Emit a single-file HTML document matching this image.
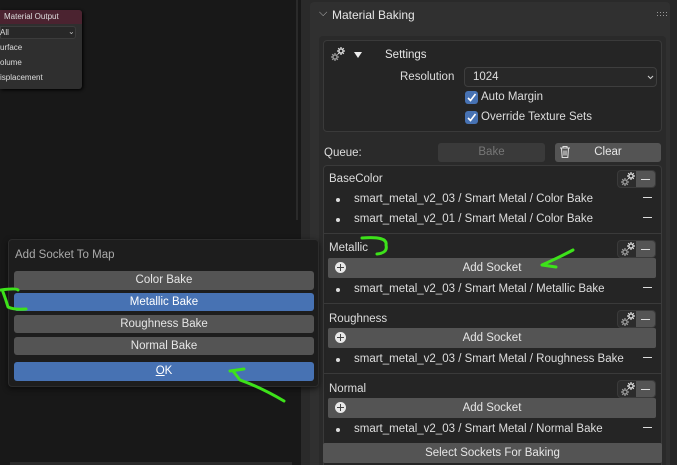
<!DOCTYPE html>
<html style="width:677px;height:465px;overflow:hidden"><head><meta charset="utf-8"><style>
*{margin:0;padding:0;box-sizing:border-box}
body{width:677px;height:465px;overflow:hidden;background:#181818;font-family:"Liberation Sans","DejaVu Sans",sans-serif;font-size:11.5px;color:#ddd;position:relative}
.a{position:absolute}
.t{position:absolute;white-space:nowrap}
.btn{position:absolute;background:#545454;border-radius:3px;color:#e6e6e6;text-align:center;font-size:11.5px}
.blue{background:#4772b3;color:#fff}
.gb{position:absolute;width:39px;height:18px;border-radius:4px;border:1px solid #3a3a3a;background:#2c2c2c}
.gb .m{position:absolute;right:0;top:0;width:19px;height:16px;background:#545454;border-radius:0 3px 3px 0}
.gb .m:after,.minus:after{content:"";position:absolute;left:5px;top:8px;width:9px;height:1px;background:#ddd}
.minus{position:absolute;width:19px;height:16px}
.dot{position:absolute;width:4px;height:4px;border-radius:2px;background:#ddd}
.plus{position:absolute;width:11px;height:11px;border-radius:6px;background:#e8e8e8}
.plus:before{content:"";position:absolute;left:2px;top:5px;width:7px;height:1px;background:#444}
.plus:after{content:"";position:absolute;left:5px;top:2px;width:1px;height:7px;background:#444}
</style></head><body>

<!-- node -->
<div class="a" style="left:0;top:10px;width:82px;height:79px;background:#2f2f2f;border-radius:0 3px 3px 0;box-shadow:1px 1px 3px #000"></div>
<div class="a" style="left:0;top:10px;width:82px;height:14px;background:#4b2330;border-radius:0 3px 0 0"></div>
<div class="t" style="left:4px;top:12px;font-size:8px;color:#ddd">Material Output</div>
<div class="a" style="left:0;top:26px;width:76px;height:13px;background:#282828;border:1px solid #3c3c3c;border-radius:0 3px 3px 0"></div>
<div class="t" style="left:0;top:28px;font-size:8px">All</div>
<div class="t" style="left:68px;top:27px;font-size:8px;color:#bbb">⌄</div>
<div class="t" style="left:0;top:43px;font-size:8px">urface</div>
<div class="t" style="left:0;top:58px;font-size:8px">olume</div>
<div class="t" style="left:0;top:73px;font-size:8px">isplacement</div>

<!-- separators -->
<div class="a" style="left:296px;top:0;width:2px;height:220px;background:#2a2a2a"></div>
<div class="a" style="left:10px;top:462px;width:282px;height:3px;background:#2a2a2a"></div>

<!-- right column -->
<div class="a" style="left:301px;top:0;width:376px;height:465px;background:#2a2a2a"></div>
<div class="a" style="left:310px;top:2px;width:360px;height:463px;background:#303030;border-radius:4px 4px 0 0"></div>
<div class="a" style="left:670px;top:0;width:7px;height:465px;background:#262626"></div>
<div class="t" style="left:319px;top:7px;font-size:11px;color:#bbb">⌵</div>
<div class="t" style="left:332px;top:8px;font-size:12px;color:#e6e6e6">Material Baking</div>
<svg class="a" style="left:657px;top:12px" width="12" height="6"><g fill="#999"><rect x="0" y="0" width="1" height="1"/><rect x="3" y="0" width="1" height="1"/><rect x="6" y="0" width="1" height="1"/><rect x="9" y="0" width="1" height="1"/><rect x="0" y="3" width="1" height="1"/><rect x="3" y="3" width="1" height="1"/><rect x="6" y="3" width="1" height="1"/><rect x="9" y="3" width="1" height="1"/></g></svg>
<div class="a" style="left:319px;top:36px;width:347px;height:429px;background:#2a2a2a;border-radius:4px 4px 0 0"></div>

<!-- settings box -->
<div class="a" style="left:323px;top:40px;width:339px;height:92px;background:#252525;border:1px solid #3a3a3a;border-radius:4px"></div>
<svg class="a" style="left:330px;top:46px" width="16" height="16" viewBox="0 0 16 16"><g stroke="#ddd" stroke-width="1.3"><circle cx="11" cy="5" r="2" fill="none"/><path d="M11 1v2M11 7v2M7 5h2M13 5h2M8.2 2.2l1.3 1.3M12.5 6.5l1.3 1.3M8.2 7.8l1.3-1.3M12.5 3.5l1.3-1.3"/></g><g stroke="#999" stroke-width="1.3"><circle cx="5" cy="11" r="2" fill="none"/><path d="M5 7v2M5 13v2M1 11h2M7 11h2M2.2 8.2l1.3 1.3M6.5 12.5l1.3 1.3M2.2 13.8l1.3-1.3M6.5 9.5l1.3-1.3"/></g></svg>
<div class="a" style="left:354px;top:52px;width:0;height:0;border-left:4px solid transparent;border-right:4px solid transparent;border-top:6px solid #eee"></div>
<div class="t" style="left:385px;top:49px;color:#e6e6e6">Settings</div>
<div class="t" style="left:400px;top:71px">Resolution</div>
<div class="a" style="left:464px;top:67px;width:193px;height:20px;background:#282828;border:1px solid #3e3e3e;border-radius:4px"></div>
<div class="t" style="left:473px;top:71px">1024</div>
<svg class="a" style="left:647px;top:75px" width="7" height="5"><path d="M1 1l2.5 2.5L6 1" stroke="#ccc" fill="none" stroke-width="1.1"/></svg>
<div class="a" style="left:465px;top:91px;width:13px;height:13px;background:#4772b3;border-radius:3px"></div>
<svg class="a" style="left:465px;top:91px" width="13" height="13"><path d="M3 7l2.5 2.5L10.5 3" stroke="#fff" stroke-width="1.6" fill="none"/></svg>
<div class="t" style="left:481px;top:91px">Auto Margin</div>
<div class="a" style="left:465px;top:111px;width:13px;height:13px;background:#4772b3;border-radius:3px"></div>
<svg class="a" style="left:465px;top:111px" width="13" height="13"><path d="M3 7l2.5 2.5L10.5 3" stroke="#fff" stroke-width="1.6" fill="none"/></svg>
<div class="t" style="left:481px;top:111px">Override Texture Sets</div>

<!-- queue -->
<div class="t" style="left:324px;top:147px">Queue:</div>
<div class="btn" style="left:438px;top:143px;width:107px;height:19px;line-height:19px;background:#3a3a3a;color:#777">Bake</div>
<div class="btn" style="left:555px;top:143px;width:106px;height:19px;line-height:19px">Clear</div>
<svg class="a" style="left:559px;top:145px" width="12" height="14" viewBox="0 0 12 14"><g stroke="#ddd" fill="none" stroke-width="1.1"><path d="M1 3h10M4 3V1.5h4V3M2.5 3.5l.7 9h5.6l.7-9M5 5.5v5M7 5.5v5"/></g></svg>

<!-- list box -->
<div class="a" style="left:323px;top:165px;width:339px;height:310px;background:#252525;border:1px solid #3a3a3a;border-radius:4px"></div>
<div class="a" style="left:324px;top:233px;width:337px;height:1px;background:#3a3a3a"></div>
<div class="a" style="left:324px;top:303px;width:337px;height:1px;background:#3a3a3a"></div>
<div class="a" style="left:324px;top:373px;width:337px;height:1px;background:#3a3a3a"></div>

<svg width="0" height="0" style="position:absolute"><defs><g id="g"><g stroke="#ddd" stroke-width="1.2"><circle cx="11" cy="5" r="2" fill="none"/><path d="M11 1v2M11 7v2M7 5h2M13 5h2M8.2 2.2l1.3 1.3M12.5 6.5l1.3 1.3M8.2 7.8l1.3-1.3M12.5 3.5l1.3-1.3"/></g><g stroke="#999" stroke-width="1.2"><circle cx="5" cy="11" r="2" fill="none"/><path d="M5 7v2M5 13v2M1 11h2M7 11h2M2.2 8.2l1.3 1.3M6.5 12.5l1.3 1.3M2.2 13.8l1.3-1.3M6.5 9.5l1.3-1.3"/></g></g></defs></svg>

<!-- BaseColor -->
<div class="t" style="left:329px;top:173px">BaseColor</div>
<div class="gb" style="left:617px;top:170px"><svg class="a" style="left:2px;top:0" width="16" height="16"><use href="#g"/></svg><div class="m"></div></div>
<div class="dot" style="left:336px;top:198px"></div>
<div class="t" style="left:354px;top:193px">smart_metal_v2_03 / Smart Metal / Color Bake</div>
<div class="minus" style="left:638px;top:189px"></div>
<div class="dot" style="left:336px;top:218px"></div>
<div class="t" style="left:354px;top:213px">smart_metal_v2_01 / Smart Metal / Color Bake</div>
<div class="minus" style="left:638px;top:209px"></div>

<!-- Metallic -->
<div class="t" style="left:329px;top:242px">Metallic</div>
<div class="gb" style="left:617px;top:240px"><svg class="a" style="left:2px;top:0" width="16" height="16"><use href="#g"/></svg><div class="m"></div></div>
<div class="btn" style="left:328px;top:258px;width:328px;height:20px;line-height:20px;border-radius:2px">Add Socket</div>
<div class="plus" style="left:335px;top:262px"></div>
<div class="dot" style="left:336px;top:288px"></div>
<div class="t" style="left:354px;top:283px">smart_metal_v2_03 / Smart Metal / Metallic Bake</div>
<div class="minus" style="left:638px;top:279px"></div>

<!-- Roughness -->
<div class="t" style="left:329px;top:313px">Roughness</div>
<div class="gb" style="left:617px;top:310px"><svg class="a" style="left:2px;top:0" width="16" height="16"><use href="#g"/></svg><div class="m"></div></div>
<div class="btn" style="left:328px;top:328px;width:328px;height:20px;line-height:20px;border-radius:2px">Add Socket</div>
<div class="plus" style="left:335px;top:332px"></div>
<div class="dot" style="left:336px;top:358px"></div>
<div class="t" style="left:354px;top:353px">smart_metal_v2_03 / Smart Metal / Roughness Bake</div>
<div class="minus" style="left:638px;top:349px"></div>

<!-- Normal -->
<div class="t" style="left:329px;top:383px">Normal</div>
<div class="gb" style="left:617px;top:380px"><svg class="a" style="left:2px;top:0" width="16" height="16"><use href="#g"/></svg><div class="m"></div></div>
<div class="btn" style="left:328px;top:398px;width:328px;height:20px;line-height:20px;border-radius:2px">Add Socket</div>
<div class="plus" style="left:335px;top:402px"></div>
<div class="dot" style="left:336px;top:428px"></div>
<div class="t" style="left:354px;top:423px">smart_metal_v2_03 / Smart Metal / Normal Bake</div>
<div class="minus" style="left:638px;top:419px"></div>

<div class="btn" style="left:323px;top:443px;width:339px;height:20px;line-height:20px;border-radius:2px">Select Sockets For Baking</div>

<!-- popup -->
<div class="a" style="left:8px;top:239px;width:311px;height:148px;background:#1d1d1d;border:1px solid #2c2c2c;border-radius:4px;box-shadow:0 2px 6px rgba(0,0,0,.6)"></div>
<div class="t" style="left:15px;top:249px;color:#aaa">Add Socket To Map</div>
<div class="btn" style="left:14px;top:271px;width:300px;height:19px;line-height:19px">Color Bake</div>
<div class="btn blue" style="left:14px;top:293px;width:300px;height:18px;line-height:18px">Metallic Bake</div>
<div class="btn" style="left:14px;top:315px;width:300px;height:18px;line-height:18px">Roughness Bake</div>
<div class="btn" style="left:14px;top:337px;width:300px;height:18px;line-height:18px">Normal Bake</div>
<div class="btn blue" style="left:14px;top:362px;width:300px;height:19px;line-height:19px"><u>O</u>K</div>

<!-- green annotations -->
<svg class="a" style="left:0;top:0" width="677" height="465"><g stroke="#3de21a" stroke-width="3" fill="none" stroke-linecap="round" stroke-linejoin="round">
<path d="M1 290 Q16 288 18 290 M3 292 Q6 300 8 307 Q14 310 26 309"/>
<path d="M230 371 L244 369 M233 371 L240 380 Q260 387 284 401"/>
<path d="M362 238 Q388 236 386 245 Q388 253 377 254"/>
<path d="M573 250 Q560 257 542 265 L556 267"/>
</g></svg>
</body></html>
